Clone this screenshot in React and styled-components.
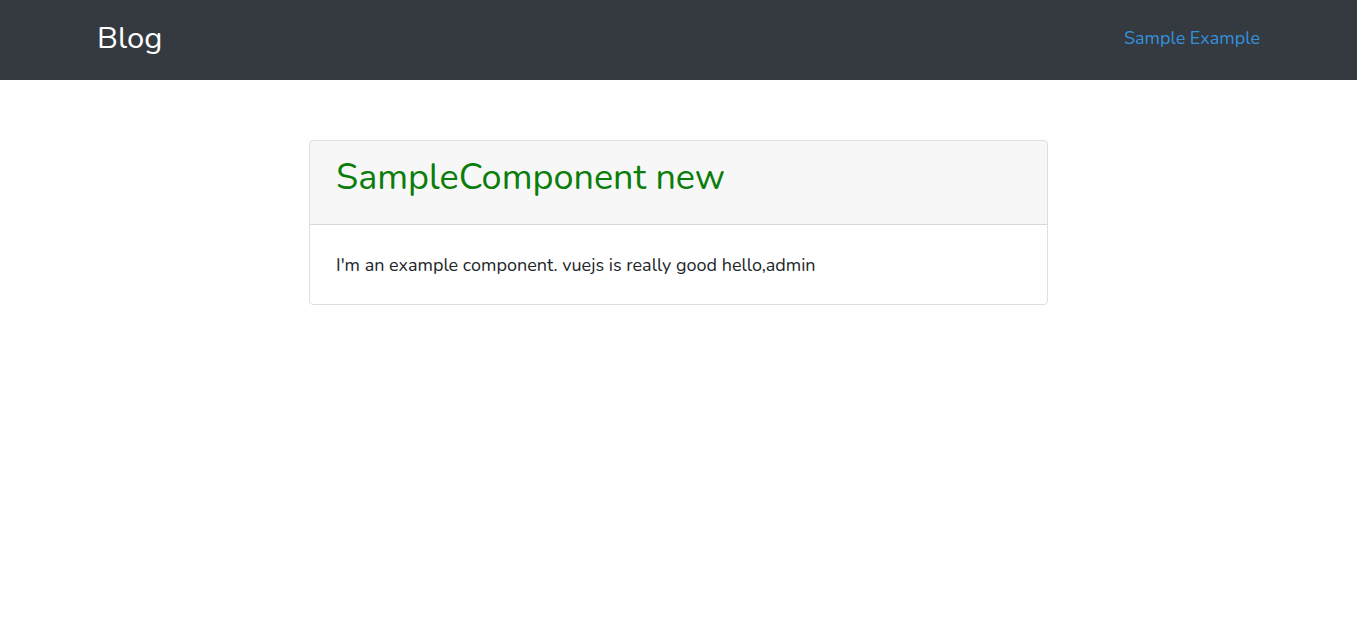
import React from "react";
import styled, { createGlobalStyle } from "styled-components";

const GlobalStyle = createGlobalStyle`
  html, body { margin: 0; padding: 0; background: #fff; }
  body {
    font-family: "Nunito", Lato, "Open Sans", sans-serif;
    color: #212529;
  }
  * { box-sizing: border-box; }
`;

const NavBar = styled.nav`
  background: #343a40;
  height: 80px;
  display: flex;
  align-items: center;
`;

const NavContainer = styled.div`
  width: 1163px;
  margin: 0 auto;
  display: flex;
  align-items: center;
  justify-content: space-between;
`;

const Brand = styled.a`
  color: #fff;
  font-size: 31px;
  line-height: 1;
  text-decoration: none;
  margin-top: -4px;
`;

const NavLink = styled.a`
  color: #3490dc;
  font-size: 18px;
  text-decoration: none;
  margin-top: -4px;
`;

const Main = styled.main`
  padding-top: 60px;
  display: flex;
  justify-content: center;
`;

const Card = styled.div`
  width: 739px;
  border: 1px solid rgba(0, 0, 0, 0.125);
  border-radius: 4px;
  overflow: hidden;
`;

const CardHeader = styled.div`
  height: 84px;
  background: rgba(0, 0, 0, 0.03);
  border-bottom: 1px solid rgba(0, 0, 0, 0.125);
  padding: 0 26px 10px;
  display: flex;
  align-items: center;
`;

const Title = styled.h1`
  margin: 0;
  font-weight: 400;
  font-size: 36px;
  color: #0a7d0a;
  line-height: 1.2;
`;

const CardBody = styled.div`
  height: 79px;
  padding: 0 26px;
  display: flex;
  align-items: center;
  font-size: 18px;
`;

export default function App() {
  return (
    <>
      <GlobalStyle />
      <NavBar>
        <NavContainer>
          <Brand href="#">Blog</Brand>
          <NavLink href="#">Sample Example</NavLink>
        </NavContainer>
      </NavBar>
      <Main>
        <Card>
          <CardHeader>
            <Title>SampleComponent new</Title>
          </CardHeader>
          <CardBody>I'm an example component. vuejs is really good hello,admin</CardBody>
        </Card>
      </Main>
    </>
  );
}
